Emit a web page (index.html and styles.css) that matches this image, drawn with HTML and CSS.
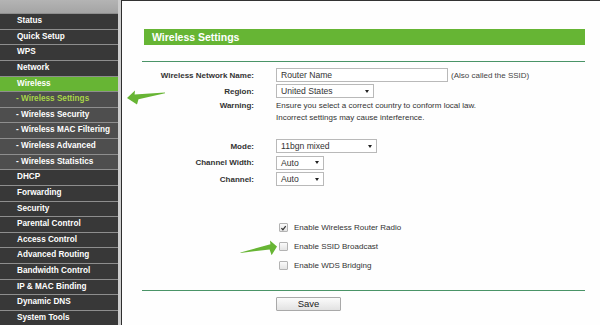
FILE: index.html
```html
<!DOCTYPE html>
<html>
<head>
<meta charset="utf-8">
<link rel="stylesheet" href="styles.css">
</head>
<body>
<div class="page">
  <aside class="sidebar">
    <div class="side-head"></div>
    <ul class="nav">
      <li class="nav-item">Status</li>
      <li class="nav-item">Quick Setup</li>
      <li class="nav-item">WPS</li>
      <li class="nav-item">Network</li>
      <li class="nav-item active">Wireless</li>
      <li class="nav-item sub current">- Wireless Settings</li>
      <li class="nav-item sub">- Wireless Security</li>
      <li class="nav-item sub">- Wireless MAC Filtering</li>
      <li class="nav-item sub">- Wireless Advanced</li>
      <li class="nav-item sub">- Wireless Statistics</li>
      <li class="nav-item">DHCP</li>
      <li class="nav-item">Forwarding</li>
      <li class="nav-item">Security</li>
      <li class="nav-item">Parental Control</li>
      <li class="nav-item">Access Control</li>
      <li class="nav-item">Advanced Routing</li>
      <li class="nav-item">Bandwidth Control</li>
      <li class="nav-item">IP &amp; MAC Binding</li>
      <li class="nav-item">Dynamic DNS</li>
      <li class="nav-item">System Tools</li>
    </ul>
  </aside>
  <main class="content">
    <div class="title-bar">Wireless Settings</div>
    <div class="rule rule-top"></div>

    <section class="group group-basic">
      <div class="row">
        <div class="label">Wireless Network Name:</div>
        <div class="val"><span class="textbox">Router Name</span><span class="hint">(Also called the SSID)</span></div>
      </div>
      <div class="row">
        <div class="label">Region:</div>
        <div class="val"><span class="select w-region">United States<span class="caret"></span></span></div>
      </div>
      <div class="row row-warn">
        <div class="label">Warning:</div>
        <div class="val warn">Ensure you select a correct country to conform local law.<br>Incorrect settings may cause interference.</div>
      </div>
    </section>

    <section class="group group-radio">
      <div class="row">
        <div class="label">Mode:</div>
        <div class="val"><span class="select w-mode">11bgn mixed<span class="caret"></span></span></div>
      </div>
      <div class="row">
        <div class="label">Channel Width:</div>
        <div class="val"><span class="select w-small">Auto<span class="caret"></span></span></div>
      </div>
      <div class="row">
        <div class="label">Channel:</div>
        <div class="val"><span class="select w-small">Auto<span class="caret"></span></span></div>
      </div>
    </section>

    <section class="group group-checks">
      <div class="row check-row">
        <div class="label"></div>
        <div class="val"><span class="box"><svg viewBox="0 0 8 8" width="8" height="8"><path d="M1.6 4.2 L3.3 6 L6.5 1.8" fill="none" stroke="#333" stroke-width="1.4"/></svg></span>Enable Wireless Router Radio</div>
      </div>
      <div class="row check-row">
        <div class="label"></div>
        <div class="val"><span class="box"></span>Enable SSID Broadcast</div>
      </div>
      <div class="row check-row">
        <div class="label"></div>
        <div class="val"><span class="box"></span>Enable WDS Bridging</div>
      </div>
    </section>

    <div class="rule rule-bottom"></div>
    <div class="row save-row">
      <div class="label"></div>
      <div class="val"><span class="btn">Save</span></div>
    </div>
  </main>

  <svg class="arrow arrow-left" viewBox="0 0 40 16" width="40" height="16">
    <polygon points="1,9 9,1.5 8.6,5.6 39,3.4 39,4.2 12.5,10.2 11,15.5" fill="#67b534"/>
  </svg>
  <svg class="arrow arrow-right" viewBox="0 0 38 17" width="38" height="17">
    <polygon points="37,7.6 30,1.5 30.4,5.3 0.5,13.4 0.5,13.9 29.6,10.4 31.6,16.2" fill="#67b534"/>
  </svg>
</div>
</body>
</html>
```

FILE: styles.css
```css
html, body {
  margin: 0;
  padding: 0;
  background: #fefefe;
}
body {
  font-family: "Liberation Sans", Arial, sans-serif;
  font-size: 8px;
  color: #333;
}
.page {
  position: relative;
  display: flex;
  width: 600px;
  height: 325px;
  overflow: hidden;
}

/* ---------- sidebar ---------- */
.sidebar {
  width: 118px;
  flex: none;
  background: #363636;
  border-right: 3px solid #cdcdcd;
}
.side-head {
  height: 13px;
  background: linear-gradient(#b4b4b4, #a4a4a4);
}
.nav {
  list-style: none;
  margin: 0;
  padding: 0;
}
.nav-item {
  height: 14.63px;
  line-height: 14.63px;
  border-top: 1px solid #8e8e8e;
  padding-left: 17px;
  font-weight: bold;
  font-size: 8.2px;
  color: #fff;
  white-space: nowrap;
  background: #383838;
}
.nav-item.sub {
  padding-left: 16px;
  background: #4e4e4e;
}
.nav-item.active {
  background: #67b534;
}
.nav-item.current {
  color: #a9d648;
}

/* ---------- content ---------- */
.content {
  flex: 1;
  border-left: 1px solid #2e2e2e;
  border-top: 1px solid #333;
  padding: 28px 15px 0 20px;
  background: #fefefe;
}
.title-bar {
  margin-left: 2px;
  height: 16px;
  line-height: 16px;
  background: #66b534;
  color: #fff;
  font-weight: bold;
  font-size: 10.5px;
  padding-left: 8px;
}
.rule {
  height: 1px;
  background: #4a9467;
}
.rule-top {
  margin-top: 16px;
}

.row {
  display: grid;
  grid-template-columns: 112px 1fr;
  column-gap: 22px;
  align-items: center;
}
.label {
  text-align: right;
  font-weight: bold;
  font-size: 8px;
  color: #333;
  white-space: nowrap;
}
.val {
  display: flex;
  align-items: center;
  white-space: nowrap;
}

.group-basic {
  margin-top: 6px;
}
.group-basic .row {
  height: 14px;
  margin-bottom: 2px;
}
.group-basic .row-warn {
  height: auto;
  align-items: start;
  line-height: 12px;
  margin-top: 0;
}
.warn {
  display: block;
  font-size: 8px;
}

.textbox {
  box-sizing: border-box;
  width: 172px;
  height: 14px;
  line-height: 12px;
  border: 1px solid #b9b9b9;
  padding-left: 4px;
  font-size: 8.6px;
  color: #333;
  background: #fff;
}
.hint {
  margin-left: 3px;
  font-size: 8px;
  color: #444;
}

.select {
  box-sizing: border-box;
  display: flex;
  align-items: center;
  justify-content: space-between;
  height: 14px;
  border: 1px solid #b9b9b9;
  padding: 0 4px 0 4px;
  font-size: 8.6px;
  color: #333;
  background: #fff;
}
.w-region { width: 98px; }
.w-mode { width: 101px; }
.w-small { width: 48px; }
.caret {
  width: 0;
  height: 0;
  border-left: 2px solid transparent;
  border-right: 2px solid transparent;
  border-top: 3.5px solid #222;
}

.group-radio {
  margin-top: 15px;
}
.group-radio .row {
  height: 14px;
  margin-bottom: 2.5px;
}

.group-checks {
  margin-top: 32px;
}
.check-row {
  height: 19px;
}
.check-row .val {
  padding-left: 3px;
  font-size: 8px;
  color: #333;
}
.box {
  box-sizing: border-box;
  width: 9px;
  height: 9px;
  border: 1px solid #b3b3b3;
  border-radius: 1px;
  background: linear-gradient(#fafafa, #e4e4e4);
  margin-right: 6px;
  display: flex;
  align-items: center;
  justify-content: center;
}
.box svg {
  display: block;
}

.rule-bottom {
  margin-top: 15px;
}
.save-row {
  margin-top: 6px;
}
.btn {
  box-sizing: border-box;
  width: 65px;
  height: 14px;
  line-height: 12px;
  text-align: center;
  border: 1px solid #a9a9a9;
  border-radius: 1px;
  background: linear-gradient(#fbfbfb, #e2e2e2);
  font-size: 9.5px;
  color: #222;
}

/* ---------- overlay arrows ---------- */
.arrow {
  position: absolute;
}
.arrow-left {
  left: 126px;
  top: 89px;
}
.arrow-right {
  left: 240px;
  top: 239px;
}
```
